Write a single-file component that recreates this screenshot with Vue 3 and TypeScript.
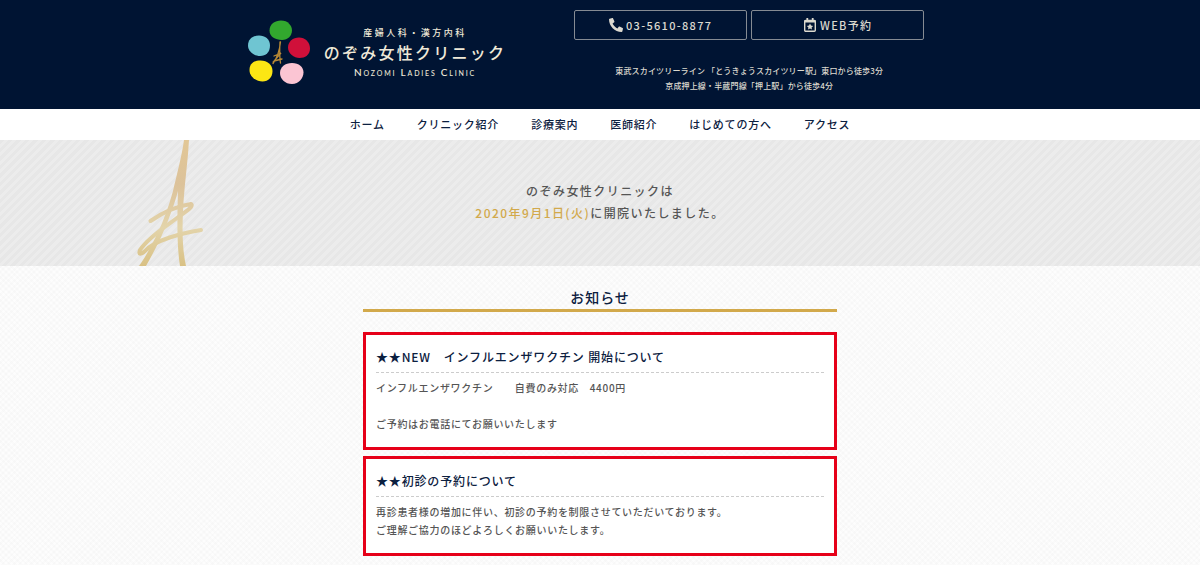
<script setup lang="ts">
interface Notice {
  title: string
  lines: string[]
}

const menu: string[] = ['ホーム', 'クリニック紹介', '診療案内', '医師紹介', 'はじめての方へ', 'アクセス']

const notices: Notice[] = [
  {
    title: '★★NEW　インフルエンザワクチン 開始について',
    lines: ['インフルエンザワクチン　　自費のみ対応　4400円', '', 'ご予約はお電話にてお願いいたします'],
  },
  {
    title: '★★初診の予約について',
    lines: [
      '再診患者様の増加に伴い、初診の予約を制限させていただいております。',
      'ご理解ご協力のほどよろしくお願いいたします。',
    ],
  },
]
</script>

<template>
  <div class="page">
    <header class="header">
      <a class="logo" href="#">
        <svg class="mark" viewBox="0 0 64 66" aria-hidden="true">
          <path fill="#32a82e" d="M21.500 10.500C21.500 4 27 .5 33 .5c7 0 11 5 11 10s-4 9.500-10 9.500c-7 0-12.500-3.500-12.500-9.500z" />
          <path fill="#6fc5d2" d="M0 25.500C0 19 5 15.500 11 15.500S22 19 22 25.500 18 36 12 36 0 31.500 0 25.500z" />
          <path fill="#d0103a" d="M40 27.500c0-6 5-10 11-10S62 22 62 28.500s-5 9.500-10.500 9.500S40 33.500 40 27.500z" />
          <path fill="#fce614" d="M1.500 50c0-6 4-9.500 11-9.500s12 4.500 12 10.500-4 10.500-10 10.500S1.500 57 1.500 50z" />
          <path fill="#fbc5d3" d="M32 53c0-6 5-10 12-10s11.500 4 11.500 9.500S51 64 44 64 32 59 32 53z" />
          <path
            fill="none"
            stroke="#b98a35"
            stroke-width="1.300"
            stroke-linecap="round"
            d="M32.500 22C31.500 31 29 38 25 43.500M32 22c-.500 8-.500 15 .500 21M26 36l7-3-7 8 8-2"
          />
        </svg>
        <span class="names">
          <span class="dept">産婦人科・漢方内科</span>
          <span class="name">のぞみ女性クリニック</span>
          <span class="roman">Nozomi Ladies Clinic</span>
        </span>
      </a>
      <div class="contact">
        <div class="buttons">
          <a class="button" href="tel:03-5610-8877">
            <svg class="icon" viewBox="0 0 512 512" aria-hidden="true">
              <path
                fill="currentColor"
                d="M493 25 389 1c-11-3-23 3-27 14l-48 112c-4 10-1 22 7 28l61 50c-36 76-99 140-177 177l-50-61c-6-8-18-11-28-7L15 362c-11 4-17 16-14 27l24 104c3 11 12 19 24 19 256 0 463-207 463-463 0-12-8-21-19-24z"
                transform="matrix(-1 0 0 1 512 0)"
              />
            </svg>
            <span>03-5610-8877</span>
          </a>
          <a class="button" href="#reserve">
            <svg class="icon" viewBox="0 0 14 14" aria-hidden="true">
              <rect x="1.700" y="2.500" width="10.600" height="10.700" rx="1" fill="none" stroke="currentColor" stroke-width="1.400" />
              <path fill="currentColor" d="M1.500 2h11v2.500h-11zM3.400 0h1.800v3H3.400zM8.800 0h1.800v3H8.800z" />
              <path fill="currentColor" d="m7 5.600 1 2 2.100.3-1.500 1.500.4 2.100-2-1-2 1 .4-2.100-1.500-1.500L6 7.600z" />
            </svg>
            <span>WEB予約</span>
          </a>
        </div>
        <p class="route">
          東武スカイツリーライン 「とうきょうスカイツリー駅」東口から徒歩3分<br />
          京成押上線・半蔵門線「押上駅」から徒歩4分
        </p>
      </div>
    </header>

    <nav class="nav">
      <a v-for="item in menu" :key="item" href="#">{{ item }}</a>
    </nav>

    <section class="hero">
      <svg class="tower" viewBox="0 0 68 126" aria-hidden="true">
        <defs>
          <linearGradient id="gold" gradientUnits="userSpaceOnUse" x1="0" y1="0" x2="0" y2="126">
            <stop offset="0" stop-color="#e2c796" />
            <stop offset="0.35" stop-color="#dcc29a" />
            <stop offset="0.7" stop-color="#e3d4aa" />
            <stop offset="1" stop-color="#d9c184" />
          </linearGradient>
        </defs>
        <path
          fill="url(#gold)"
          d="M47 0h5C51 20 48 40 46.500 62 45 85 45 108 49 126h-6C40 108 40 80 41 51 37 66 30 84 25 95 20 106 14 117 9 126H2C10 115 22 92 27 78 31 68 34 58 36 51 40 34 45 15 47 0z"
        />
        <path
          fill="none"
          stroke="url(#gold)"
          stroke-width="4"
          stroke-linecap="round"
          stroke-linejoin="round"
          d="M13.500 81C25 73 40 66 54 64 57 66 50 71 44 75 34 83 12 96 3 110 1 115 4 114.500 8 111 18 100 45 93 64 90"
        />
      </svg>
      <p class="message">
        のぞみ女性クリニックは<br />
        <em>2020年9月1日(火)</em>に開院いたしました。
      </p>
    </section>

    <main class="news">
      <h2>お知らせ</h2>
      <article v-for="notice in notices" :key="notice.title" class="card">
        <h3>{{ notice.title }}</h3>
        <p v-for="(line, i) in notice.lines" :key="i">{{ line }}</p>
      </article>
    </main>
  </div>
</template>

<style>
body {
  margin: 0;
  background: #fcfcfc;
}
</style>

<style scoped>
.page {
  font-family: "Noto Sans CJK JP", sans-serif;
  font-weight: 500;
  color: #555;
  min-height: 100vh;
  overflow: hidden;
  box-sizing: border-box;
  background:
    repeating-linear-gradient(45deg, transparent 0 2px, rgba(0, 0, 0, 0.01) 2px 4px),
    repeating-linear-gradient(-45deg, transparent 0 2px, rgba(0, 0, 0, 0.01) 2px 4px),
    #fdfdfd;
}
a {
  color: inherit;
  text-decoration: none;
}
h2,
h3,
p {
  margin: 0;
}
h2,
h3,
.nav,
.card {
  letter-spacing: 0.07em;
}
.header {
  display: flex;
  justify-content: center;
  gap: 68px;
  padding: 10px 28px 16px 0;
  background: #001433;
  color: #dcd9cf;
}
.logo {
  display: flex;
  gap: 12px;
  padding-top: 10px;
}
.mark {
  width: 64px;
  height: 66px;
}
.names {
  display: flex;
  flex-direction: column;
  align-items: center;
  padding-top: 5px;
  color: #efe9d8;
}
.dept {
  font-size: 9px;
  line-height: 16px;
  letter-spacing: 0.28em;
}
.name {
  font-size: 16px;
  line-height: 23px;
  letter-spacing: 0.14em;
}
.roman {
  font-family: Lato, sans-serif;
  font-size: 10px;
  line-height: 17px;
  font-variant: small-caps;
  letter-spacing: 0.18em;
}
.contact {
  display: flex;
  flex-direction: column;
  gap: 23px;
}
.buttons {
  display: flex;
  gap: 4px;
}
.button {
  display: flex;
  align-items: center;
  justify-content: center;
  gap: 3px;
  box-sizing: border-box;
  width: 173px;
  height: 30px;
  border: 1px solid #858b93;
  border-radius: 2px;
  font-size: 11px;
  letter-spacing: 0.12em;
}
.icon {
  width: 14px;
  height: 14px;
}
.route {
  font-size: 8px;
  line-height: 15px;
  letter-spacing: 0.02em;
  text-align: center;
}
.nav {
  display: flex;
  justify-content: center;
  gap: 32px;
  background: #fff;
  color: #0c2040;
  font-size: 11px;
  line-height: 31px;
}
.hero {
  position: relative;
  padding: 40px 0 42px;
  background: repeating-linear-gradient(135deg, #e7e7e7 0 3px, #ececec 3px 6px);
}
.tower {
  position: absolute;
  top: 0;
  left: 11.4%;
  height: 100%;
}
.message {
  font-size: 12px;
  line-height: 22px;
  letter-spacing: 0.12em;
  text-align: center;
}
.message em {
  font-style: normal;
  color: #d2a94b;
}
.news {
  width: 474px;
  max-width: 100%;
  margin: 0 auto;
  padding: 20px 0 8px;
}
.news h2 {
  margin-bottom: 20px;
  border-bottom: 3px solid #d2a94b;
  font-size: 14px;
  line-height: 23px;
  font-weight: 500;
  text-align: center;
  color: #0c2040;
}
.card {
  margin-bottom: 6px;
  padding: 10px 10px 14px;
  border: 3px solid #e60018;
  background: #fff;
  font-size: 10px;
  line-height: 18px;
}
.card h3 {
  margin-bottom: 6px;
  padding-bottom: 4px;
  border-bottom: 1px dashed #ccc;
  font-size: 12px;
  line-height: 23px;
  font-weight: 500;
  color: #0c2040;
}
.card p {
  min-height: 18px;
}
</style>
